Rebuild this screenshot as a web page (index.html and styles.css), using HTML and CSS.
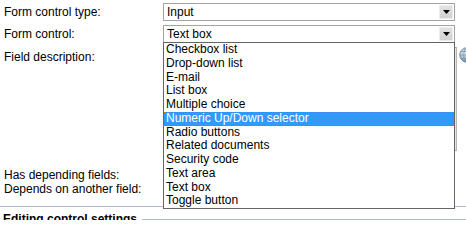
FILE: index.html
```html
<!DOCTYPE html>
<html>
<head>
<meta charset="utf-8">
<link rel="stylesheet" href="styles.css">
</head>
<body>
<div class="form">
  <div class="row r1">
    <div class="label">Form control type:</div>
    <div class="ctrl">
      <div class="select"><span class="val">Input</span><span class="arrow"><svg width="7" height="4" viewBox="0 0 7 4"><polygon points="0,0 7,0 3.5,4" fill="#000"/></svg></span></div>
    </div>
  </div>
  <div class="row r2">
    <div class="label">Form control:</div>
    <div class="ctrl">
      <div class="select open"><span class="val">Text box</span><span class="arrow"><svg width="7" height="4" viewBox="0 0 7 4"><polygon points="0,0 7,0 3.5,4" fill="#000"/></svg></span>
        <ul class="dropdown">
          <li>Checkbox list</li>
          <li>Drop-down list</li>
          <li>E-mail</li>
          <li>List box</li>
          <li>Multiple choice</li>
          <li class="hl">Numeric Up/Down selector</li>
          <li>Radio buttons</li>
          <li>Related documents</li>
          <li>Security code</li>
          <li>Text area</li>
          <li>Text box</li>
          <li>Toggle button</li>
        </ul>
      </div>
    </div>
  </div>
  <div class="row r3">
    <div class="label top">Field description:</div>
    <div class="ctrl textctrl">
      <div class="textarea"></div>
      <svg class="globe" width="16" height="16" viewBox="0 0 16 16">
        <defs>
          <radialGradient id="g" cx="0.35" cy="0.35" r="0.7">
            <stop offset="0" stop-color="#e4eef6"/>
            <stop offset="0.6" stop-color="#9db4c8"/>
            <stop offset="1" stop-color="#5f7d98"/>
          </radialGradient>
        </defs>
        <circle cx="8" cy="8" r="7.3" fill="url(#g)" stroke="#6a8299" stroke-width="0.8"/>
        <ellipse cx="8" cy="8" rx="3.2" ry="7.2" fill="none" stroke="#7890a6" stroke-width="0.7"/>
        <path d="M1 8 H15 M2.2 4.5 H13.8 M2.2 11.5 H13.8" stroke="#7890a6" stroke-width="0.7" fill="none"/>
      </svg>
    </div>
  </div>
  <div class="row r4">
    <div class="label">Has depending fields:</div>
    <div class="ctrl"><span class="check"></span></div>
  </div>
  <div class="row r5">
    <div class="label">Depends on another field:</div>
    <div class="ctrl"><span class="check"></span></div>
  </div>
</div>
<div class="sep"></div>
<div class="legend"><span class="legend-text">Editing control settings</span><span class="legend-line"></span></div>
</body>
</html>
```
FILE: styles.css
```css
html, body {
  margin: 0;
  padding: 0;
  background: #fff;
  overflow: hidden;
}
body {
  font-family: "Liberation Sans", Arial, sans-serif;
  font-size: 12px;
  color: #000;
  width: 466px;
  height: 220px;
}
.row {
  display: grid;
  grid-template-columns: 163px auto;
  align-items: center;
}
.label {
  padding-left: 4px;
  line-height: 14px;
  white-space: nowrap;
}
.label.top {
  align-self: start;
  padding-top: 3px;
}
.r1 { margin-top: 3px; }
.r2 { margin-top: 4px; }
.r3 { margin-top: 4px; align-items: start; }
.r4 { margin-top: 17px; height: 14px; }
.r5 { height: 14px; }
.ctrl { min-width: 0; }
.select {
  position: relative;
  box-sizing: border-box;
  width: 292px;
  height: 18px;
  border: 1px solid #a3a3a3;
  display: flex;
  align-items: center;
  background: #fff;
}
.val {
  flex: 1;
  padding-left: 3px;
  line-height: 14px;
  white-space: nowrap;
}
.arrow {
  box-sizing: border-box;
  width: 14px;
  height: 14px;
  margin-right: 1px;
  background: linear-gradient(#e2e2e2, #d2d2d2);
  border: 1px solid #ececec;
  display: flex;
  align-items: center;
  justify-content: center;
}
.arrow svg { display: block; }
.dropdown {
  position: absolute;
  top: 16px;
  left: -1px;
  width: 292px;
  box-sizing: border-box;
  margin: 0;
  padding: 0;
  list-style: none;
  background: #fff;
  border: 1px solid #646464;
  z-index: 5;
}
.dropdown li {
  padding-left: 2px;
  height: 13.75px;
  line-height: 13.75px;
  white-space: nowrap;
}
.dropdown li.hl {
  background: #3399ff;
  color: #fff;
  outline: 1px dotted #c86a1e;
  outline-offset: -1px;
}
.textctrl {
  display: flex;
  align-items: flex-start;
  width: 320px;
}
.textarea {
  box-sizing: border-box;
  width: 294px;
  height: 104px;
  border: 1px solid #a8a8a8;
  border-right-color: #b4b4b4;
  box-shadow: inset -1px 0 0 #e4e4e4;
  flex: none;
}
.globe {
  flex: none;
  margin-left: 2px;
  display: block;
}
.check {
  display: block;
  box-sizing: border-box;
  width: 12px;
  height: 12px;
  margin-left: 3px;
  border: 1px solid #888;
}
.sep {
  margin-top: 10px;
  height: 1px;
  background: #aebbd0;
}
.legend {
  margin-top: 5px;
  display: flex;
  align-items: center;
  line-height: 14px;
}
.legend-text {
  font-weight: bold;
  padding-left: 3px;
  white-space: nowrap;
}
.legend-line {
  flex: 1;
  height: 1px;
  margin-left: 5px;
  background: #aebbd0;
}
```
